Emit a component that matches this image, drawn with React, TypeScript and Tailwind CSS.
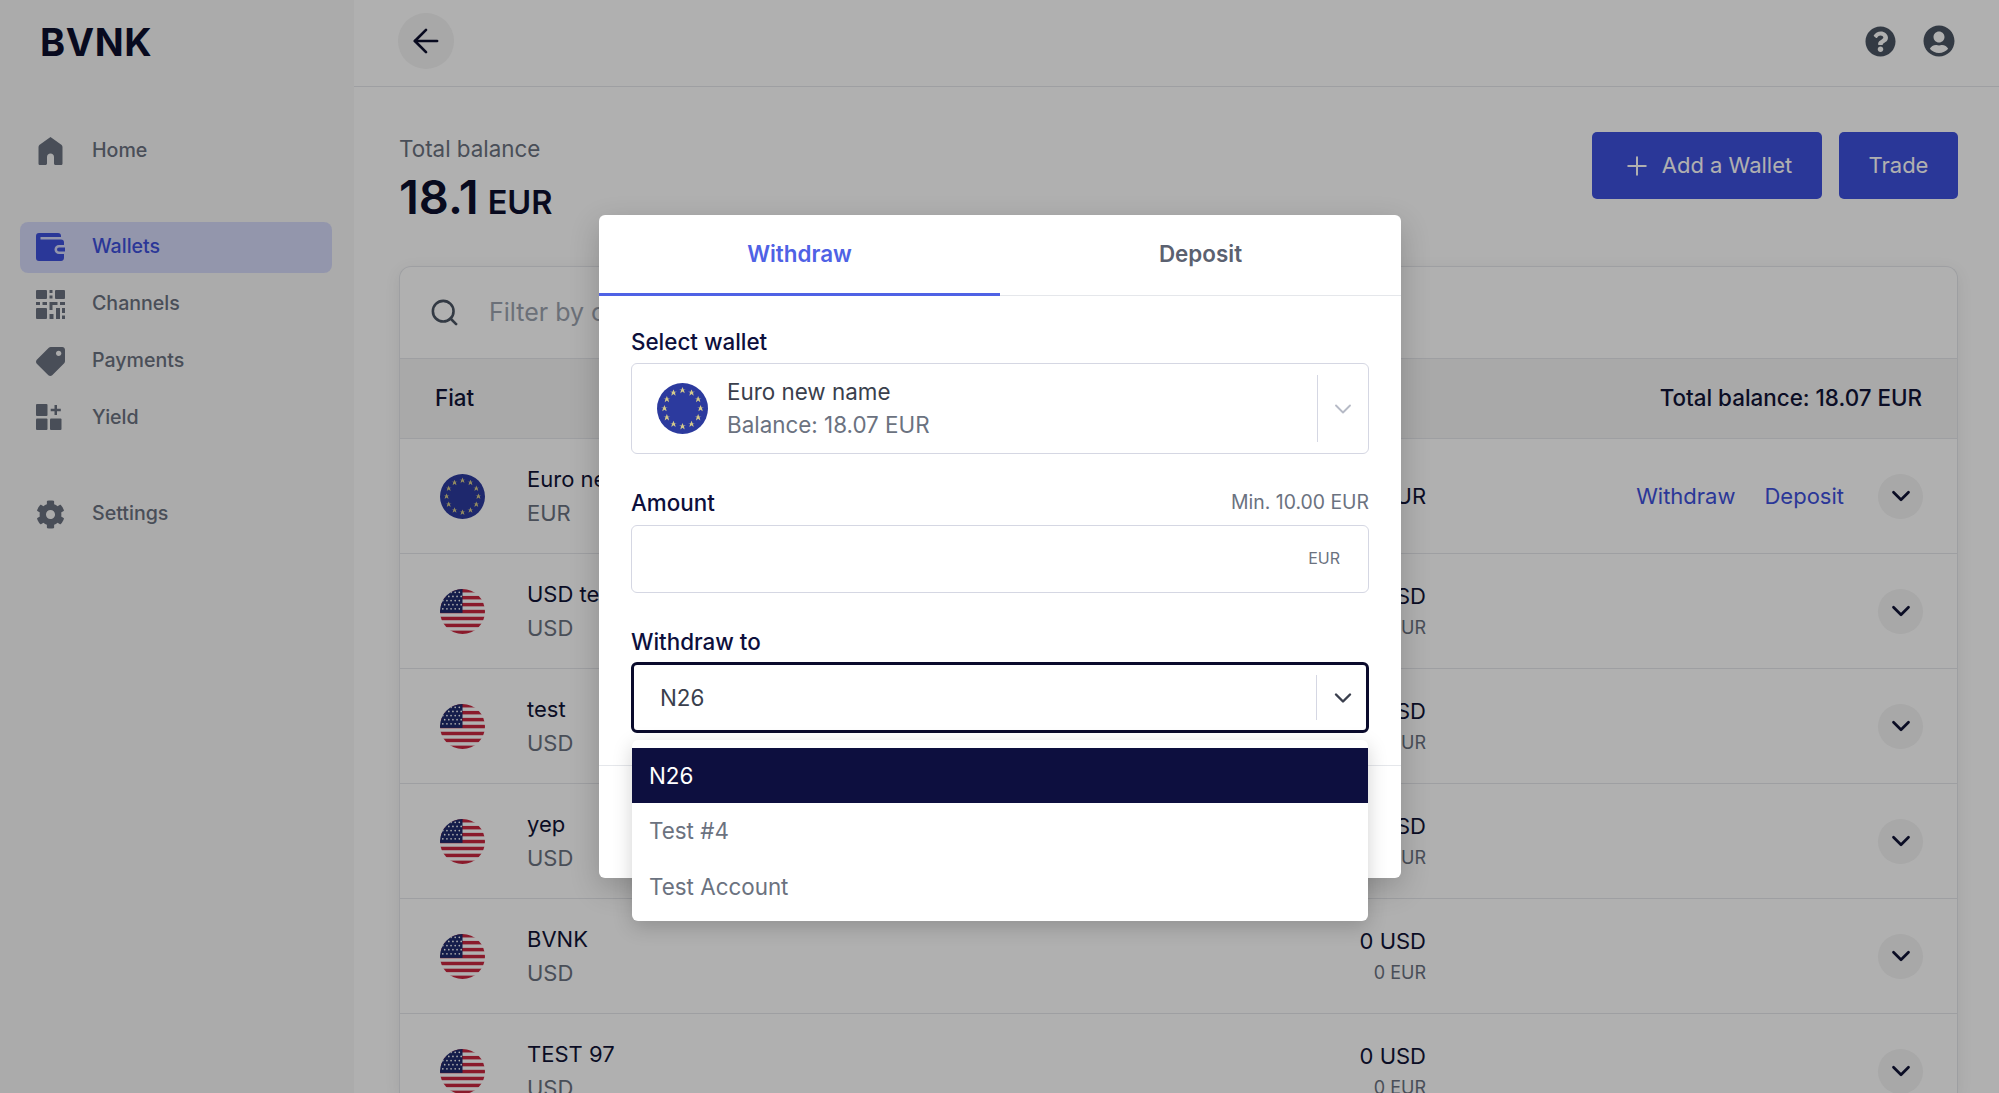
import { ArrowLeft, ChevronDown, Plus, Search } from "lucide-react";
import { FaCog, FaQuestionCircle, FaTag, FaUserCircle } from "react-icons/fa";

const EuFlag = ({ size }: { size: number }) => {
  const stars = Array.from({ length: 12 }, (_, i) => {
    const a = (i * Math.PI) / 6;
    return { x: 24 + 17 * Math.cos(a), y: 24 + 17 * Math.sin(a) };
  });
  return (
    <svg width={size} height={size} viewBox="0 0 48 48" className="shrink-0">
      <circle cx="24" cy="24" r="24" fill="#2c3a9e" />
      {stars.map((s, i) => (
        <path
          key={i}
          transform={`translate(${s.x} ${s.y}) scale(1.35)`}
          d="M0-2.4.7-.7 2.4-.7 1-.3 1.5 2 0 .8-1.5 2-1-.3-2.4-.7-.7-.7Z"
          fill="#d4c98a"
        />
      ))}
    </svg>
  );
};

const UsFlag = ({ id }: { id: string }) => {
  const stripes = [0, 7.4, 14.8, 22.2, 29.6, 37, 44.4];
  const dots = [];
  for (let r = 0; r < 5; r++) {
    for (let c = 0; c < 5; c++) {
      dots.push({ x: 3 + c * 4.4 + (r % 2) * 2, y: 3.5 + r * 4.4 });
    }
  }
  return (
    <svg width="45" height="45" viewBox="0 0 48 48" className="shrink-0">
      <defs>
        <clipPath id={id}>
          <circle cx="24" cy="24" r="24" />
        </clipPath>
      </defs>
      <g clipPath={`url(#${id})`}>
        <rect width="48" height="48" fill="#ffffff" />
        {stripes.map((y) => (
          <rect key={y} y={y} width="48" height="3.7" fill="#c8273f" />
        ))}
        <rect width="24" height="25.5" fill="#1f2a6d" />
        {dots.map((d, i) => (
          <circle key={i} cx={d.x} cy={d.y} r="0.9" fill="#ffffff" />
        ))}
      </g>
    </svg>
  );
};

const HomeIcon = () => (
  <svg width="29" height="29" viewBox="0 0 29 29" fill="currentColor">
    <path d="M14.5 0 25 7.5c1 .7 1.5 1.7 1.5 3V26.5c0 1-.7 1.5-1.5 1.5h-5.5c-.8 0-1.5-.6-1.5-1.5V20c0-2-1.500-3.500-3.500-3.500S11 18 11 20v6.500c0 .9-.7 1.500-1.500 1.500H4c-.8 0-1.500-.5-1.500-1.500V10.500c0-1.300.5-2.300 1.500-3Z" />
  </svg>
);

const WalletIcon = () => (
  <svg width="29" height="29" viewBox="0 0 29 29" fill="currentColor">
    <path d="M3 0h19c2 0 3 1 3 3v1H4.500v2.500H25c2 0 3 1 3 3V12h-5a4.500 4.500 0 0 0 0 9h5v3.500c0 2-1 3.500-3 3.500H3c-2 0-3-1-3-3V3c0-2 1-3 3-3Z" />
    <path d="M23 14.500h6V18.500h-6a2 2 0 0 1 0-4Z" />
  </svg>
);

const ChannelsIcon = () => (
  <svg width="29" height="29" viewBox="0 0 29 29" fill="currentColor">
    <rect x="0" y="0" width="11" height="9" rx="1" />
    <rect x="13.500" y="0" width="3" height="3" />
    <rect x="13.500" y="5.500" width="3" height="3" />
    <rect x="19" y="0" width="10" height="9" rx="1" />
    <rect x="0" y="12" width="4" height="3" />
    <rect x="6.500" y="12" width="4.500" height="3" />
    <rect x="13.500" y="12" width="8" height="3" />
    <rect x="24" y="12" width="5" height="3" />
    <rect x="13.500" y="15" width="3" height="5" />
    <rect x="0" y="18" width="11" height="11" rx="1" />
    <rect x="13.500" y="24" width="4" height="5" />
    <rect x="20" y="18" width="4" height="11" />
    <rect x="26" y="18" width="3" height="5" />
    <rect x="26" y="25.500" width="3" height="3.500" />
  </svg>
);

const YieldIcon = () => (
  <svg width="29" height="29" viewBox="0 0 29 29" fill="currentColor">
    <rect x="0" y="0" width="11.500" height="12" rx="1" />
    <rect x="0" y="14.500" width="11.500" height="11.500" rx="1" />
    <rect x="14" y="14.500" width="11.500" height="11.500" rx="1" />
    <path d="M18.500 1h2.500v3.800h3.800v2.400H21V11h-2.500V7.200h-3.800V4.800h3.800Z" />
  </svg>
);

const NavItem = ({
  icon,
  label,
  active,
}: {
  icon: React.ReactNode;
  label: string;
  active?: boolean;
}) => (
  <div
    className={`ml-5 mr-[22px] flex h-[51px] items-center gap-[27px] rounded-lg pb-[1px] pl-[16px] text-[19.6px] font-medium ${
      active ? "bg-[#d6daf9] text-[#3e50dc]" : "text-[#6b7280]"
    }`}
  >
    <span className="flex w-[29px] justify-center">{icon}</span>
    {label}
  </div>
);

const WalletRow = ({
  id,
  name,
  code,
  euro,
}: {
  id: string;
  name: string;
  code: string;
  euro?: boolean;
}) => (
  <div className="flex h-[115px] shrink-0 items-center border-t border-[#e5e7eb] pl-[40px] pr-[34px]">
    {euro ? <EuFlag size={45} /> : <UsFlag id={id} />}
    <div className="ml-[42px] w-[300px] text-[22px] leading-[34px]">
      <div className="text-[#111436]">{name}</div>
      <div className="text-[#6b7280]">{code}</div>
    </div>
    <div className="ml-auto flex items-center">
      {euro ? (
        <div className="mr-[210px] text-[22px] text-[#111436]">18.07 EUR</div>
      ) : (
        <div className="mr-[452px] text-right">
          <div className="text-[22px] leading-[34px] text-[#111436]">0 USD</div>
          <div className="text-[18px] leading-[30px] text-[#6b7280]">0 EUR</div>
        </div>
      )}
      {euro && (
        <div className="mr-[34px] flex gap-[29px] text-[22px] text-[#3e50dc]">
          <span>Withdraw</span>
          <span>Deposit</span>
        </div>
      )}
      <div className="flex h-[45px] w-[45px] items-center justify-center rounded-full bg-[#f3f3f3]">
        <ChevronDown size={30} strokeWidth={2.2} className="text-[#111436]" />
      </div>
    </div>
  </div>
);

export default function App() {
  const rows = [
    { id: "r1", name: "Euro new name", code: "EUR", euro: true },
    { id: "r2", name: "USD test", code: "USD" },
    { id: "r3", name: "test", code: "USD" },
    { id: "r4", name: "yep", code: "USD" },
    { id: "r5", name: "BVNK", code: "USD" },
    { id: "r6", name: "TEST 97", code: "USD" },
  ];

  return (
    <div className="relative flex h-[1093px] overflow-hidden bg-white font-['Inter',sans-serif]">
      {/* Sidebar */}
      <aside className="w-[354px] shrink-0 bg-[#f8f8f8]">
        <div className="h-[126px] pl-[40px] pt-[18px] text-[38px] font-bold leading-[48px] tracking-[0.6px] text-[#0d0f2e]">
          BVNK
        </div>
        <NavItem icon={<HomeIcon />} label="Home" />
        <div className="mt-[45px] flex flex-col gap-[6px]">
          <NavItem icon={<WalletIcon />} label="Wallets" active />
          <NavItem icon={<ChannelsIcon />} label="Channels" />
          <NavItem icon={<FaTag size={29} className="-scale-x-100" />} label="Payments" />
          <NavItem icon={<YieldIcon />} label="Yield" />
        </div>
        <div className="mt-[45px]">
          <NavItem icon={<FaCog size={29} />} label="Settings" />
        </div>
      </aside>

      {/* Main */}
      <main className="flex min-w-0 flex-1 flex-col">
        <header className="flex h-[87px] shrink-0 items-center border-b border-[#e5e7eb] pb-[4px] pl-[44px] pr-[44px]">
          <div className="flex h-14 w-14 items-center justify-center rounded-full bg-[#f3f3f3]">
            <ArrowLeft size={38} strokeWidth={1.7} className="text-[#0d0f2e]" />
          </div>
          <div className="ml-auto flex items-center gap-[27px] text-[#4b5563]">
            <FaQuestionCircle size={31} />
            <FaUserCircle size={32} />
          </div>
        </header>

        <div className="flex min-h-0 flex-1 flex-col pl-[45px] pr-[41px]">
          <div className="flex h-[179px] shrink-0 justify-between pt-[45px]">
            <div>
              <div className="text-[22.4px] leading-[34px] text-[#6b7280]">Total balance</div>
              <div className="mt-[3px] flex items-baseline gap-[9px] font-semibold leading-[56px] text-[#0d0f2e]">
                <span className="text-[47px]">18.1</span>
                <span className="text-[32.5px]">EUR</span>
              </div>
            </div>
            <div className="flex gap-[17px]">
              <button className="flex h-[67px] w-[230px] items-center justify-center gap-[10px] rounded-[5px] bg-[#3e50dc] text-[22px] text-white">
                <Plus size={30} strokeWidth={1.6} />
                Add a Wallet
              </button>
              <button className="h-[67px] w-[119px] rounded-[5px] bg-[#3e50dc] text-[22px] text-white">
                Trade
              </button>
            </div>
          </div>

          <div className="flex min-h-0 flex-1 flex-col overflow-hidden rounded-t-xl border border-b-0 border-[#e5e7eb] shadow-[0_4px_16px_rgba(0,0,0,0.08)]">
            <div className="flex h-[91px] shrink-0 items-center pl-[29px] text-[25px] text-[#9ca3af]">
              <Search size={31} strokeWidth={2} className="text-[#4b5563]" />
              <span className="ml-[29px]">Filter by currency</span>
            </div>
            <div className="flex h-[80px] shrink-0 items-center justify-between border-t border-[#e5e7eb] bg-[#f5f5f5] pb-[2px] pl-[35px] pr-[35px] text-[22.4px] font-medium text-[#111436]">
              <span>Fiat</span>
              <span>Total balance: 18.07 EUR</span>
            </div>
            {rows.map((r) => (
              <WalletRow key={r.id} {...r} />
            ))}
          </div>
        </div>
      </main>

      {/* Overlay + dialog */}
      <div className="absolute inset-0 flex justify-center bg-black/[0.31] pl-px pt-[215px]">
        <div className="h-[663px] w-[802px] rounded-md bg-white shadow-[0_10px_30px_rgba(0,0,0,0.2)]">
          <div className="flex h-[81px] border-b border-[#e5e7eb] text-[22.4px] font-semibold">
            <div className="flex h-[81px] w-1/2 items-center justify-center border-b-[3px] border-[#4f62e5] text-[#4f62e5]">
              Withdraw
            </div>
            <div className="flex w-1/2 items-center justify-center pb-[2px] text-[#5b6170]">Deposit</div>
          </div>

          <div className="px-8 pt-[32px] text-[22.4px]">
            <div className="font-medium leading-7 text-[#0d0f3c]">Select wallet</div>
            <div className="mt-[7px] flex h-[91px] items-center rounded-md border border-[#d5d7e3] pl-[25px]">
              <EuFlag size={51} />
              <div className="-mt-[2px] ml-[19px] leading-[33px]">
                <div className="text-[#3a3f4d]">Euro new name</div>
                <div className="text-[#6b7280]">Balance: 18.07 EUR</div>
              </div>
              <div className="ml-auto h-[67px] w-px bg-[#d5d7e3]" />
              <ChevronDown size={28} strokeWidth={1.6} className="ml-[11px] mr-[11px] text-[#b6bac6]" />
            </div>

            <div className="mt-[34px] flex h-7 items-center justify-between leading-7">
              <span className="pt-[1px] font-medium text-[#0d0f3c]">Amount</span>
              <span className="text-[19.4px] text-[#6b7280]">Min. 10.00 EUR</span>
            </div>
            <div className="mt-[9px] flex h-[68px] items-center justify-end rounded-md border border-[#d5d7e3] pb-[2px] pr-7 text-[16px] text-[#6b7280]">
              EUR
            </div>

            <div className="mt-[35px] font-medium leading-7 text-[#0d0f3c]">Withdraw to</div>
            <div className="relative mt-[6px] flex h-[71px] items-center rounded-md border-[3px] border-[#0a0b2c] pl-[26px] text-[#3a3f4d]">
              N26
              <div className="ml-auto h-[45px] w-px bg-[#d5d7e3]" />
              <ChevronDown size={28} strokeWidth={2.1} className="ml-[12px] mr-[9px] text-[#3a3f4d]" />

              <div className="absolute left-[-2px] right-[-2px] top-[75px] h-[181px] rounded-md bg-white pt-2 shadow-[0_6px_20px_rgba(0,0,0,0.18)]">
                <div className="flex h-[55px] items-center bg-[#0d0f3f] pl-[17px] text-white">N26</div>
                <div className="flex h-[56px] items-center pl-[17px] text-[#6b7280]">Test #4</div>
                <div className="flex h-[56px] items-center pl-[17px] text-[#6b7280]">Test Account</div>
              </div>
            </div>
          </div>

          <div className="mt-[32px] border-t border-[#e5e7eb]" />
        </div>
      </div>
    </div>
  );
}
